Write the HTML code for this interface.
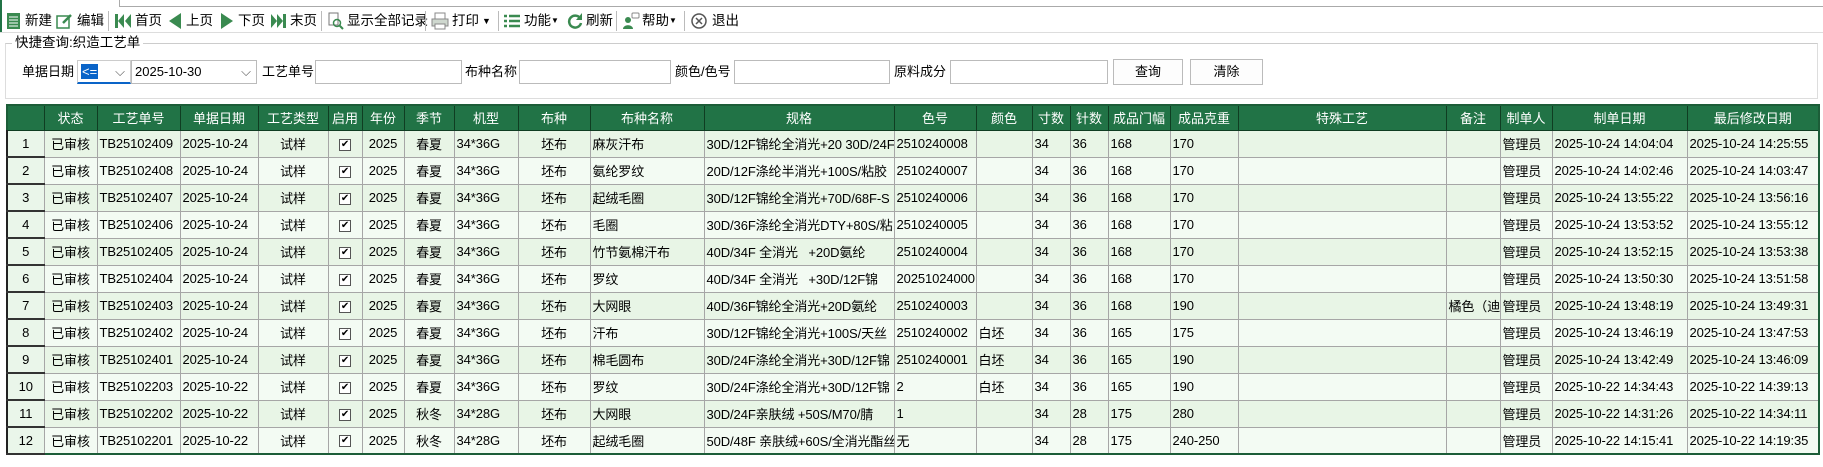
<!DOCTYPE html>
<html><head><meta charset="utf-8"><style>
*{box-sizing:border-box;margin:0;padding:0}
body{width:1823px;height:467px;background:#fff;font-family:"Liberation Sans","Noto Sans CJK SC",sans-serif;font-size:13px;color:#000;position:relative;overflow:hidden}
.a{position:absolute;white-space:nowrap}
.tb{top:11px;height:20px;line-height:20px;font-size:13.5px}
.sep{position:absolute;top:11px;width:1px;height:20px;background:#bbb}
.inp{position:absolute;top:60px;height:24px;border:1px solid #bbb;background:#fff;font-size:13px;line-height:22px;padding-left:3px}
.lbl{position:absolute;top:60px;line-height:24px;font-size:13px}
.btn{position:absolute;top:59px;height:26px;border:1px solid #bbb;background:#fdfdfd;text-align:center;line-height:24px;font-size:13px}
table{position:absolute;left:6px;top:104px;border-collapse:collapse;table-layout:fixed;width:1812px;border:2px solid #1c5d38}
th{background:#217346;color:#fff;font-weight:normal;height:25px;border:1px solid #0f3d22;font-size:13px;text-align:center;overflow:hidden;white-space:nowrap}
td{height:27px;border:1px solid #a6a6a6;font-size:13px;padding-left:2px;overflow:hidden;white-space:nowrap;letter-spacing:-0.1px}
tr:nth-child(odd) td{background:#f3fbf3}
tr:nth-child(even) td{background:#e8f5e6}
td.c{text-align:center;padding:0}
td.n{text-align:center;padding:0;background:#eaf6ea!important;border-left:2px solid #222;border-bottom:2px solid #333}
.cb{display:inline-block;width:12px;height:12px;border:1px solid #555;background:#fff;font-size:10px;line-height:10px;text-align:center;vertical-align:middle}
</style></head><body>
<div class="a" style="left:0;top:0;width:2px;height:32px;background:#217346"></div>
<div class="a" style="left:119px;top:0;width:1px;height:7px;background:#aaa"></div>
<div class="a" style="left:119px;top:6px;width:1704px;height:1px;background:#aaa"></div>
<div class="a" style="left:0;top:32px;width:1823px;height:1px;background:#ddd"></div>

<svg class="a" style="left:6px;top:12px" width="16" height="18"><rect x="1" y="1" width="13" height="16" fill="#3a8a50"/><path d="M3 5h9M3 8h9M3 11h9M3 14h9" stroke="#fff" stroke-width="1"/></svg>
<div class="a tb" style="left:25px">新建</div>
<svg class="a" style="left:56px;top:12px" width="18" height="18"><rect x="1" y="4" width="12" height="12" fill="none" stroke="#3a8a50" stroke-width="1.5"/><path d="M7 11l8-8" stroke="#3a8a50" stroke-width="2.5"/></svg>
<div class="a tb" style="left:77px">编辑</div>
<div class="sep" style="left:108px"></div>
<svg class="a" style="left:114px;top:13px" width="18" height="16"><rect x="1" y="1" width="3" height="14" fill="#3a8a50"/><path d="M10 1L4 8l6 7zM17 1l-6 7 6 7z" fill="#3a8a50"/></svg>
<div class="a tb" style="left:135px">首页</div>
<svg class="a" style="left:167px;top:12px" width="16" height="18"><path d="M14 1L2 9l12 8z" fill="#3a8a50"/></svg>
<div class="a tb" style="left:186px">上页</div>
<svg class="a" style="left:219px;top:12px" width="16" height="18"><path d="M2 1l12 8-12 8z" fill="#3a8a50"/></svg>
<div class="a tb" style="left:238px">下页</div>
<svg class="a" style="left:270px;top:13px" width="18" height="16"><path d="M1 1l6 7-6 7zM7 1l6 7-6 7z" fill="#3a8a50"/><rect x="13" y="1" width="3" height="14" fill="#3a8a50"/></svg>
<div class="a tb" style="left:290px">末页</div>
<div class="sep" style="left:321px"></div>
<svg class="a" style="left:328px;top:12px" width="16" height="18"><rect x="1" y="1" width="9" height="12" fill="none" stroke="#777"/><circle cx="9" cy="11" r="3.5" fill="none" stroke="#3a8a50" stroke-width="1.5"/><path d="M11 13l4 4" stroke="#3a8a50" stroke-width="2"/></svg>
<div class="a tb" style="left:347px">显示全部记录</div>
<div class="sep" style="left:425px"></div>
<svg class="a" style="left:431px;top:12px" width="18" height="18"><rect x="4" y="1" width="10" height="6" fill="none" stroke="#888"/><rect x="1" y="7" width="16" height="7" fill="#cfd8cf" stroke="#888"/><rect x="4" y="12" width="10" height="5" fill="#fff" stroke="#888"/></svg>
<div class="a tb" style="left:452px">打印</div>
<div class="a tb" style="left:482px;font-size:9px">▼</div>
<div class="sep" style="left:498px"></div>
<svg class="a" style="left:503px;top:13px" width="18" height="16"><path d="M1 3h3M1 8h3M1 13h3M6 3h11M6 8h11M6 13h11" stroke="#3a8a50" stroke-width="2.5"/></svg>
<div class="a tb" style="left:524px">功能</div>
<div class="a tb" style="left:551px;font-size:8px">▼</div>
<svg class="a" style="left:567px;top:12px" width="16" height="18"><path d="M13 6A6 6 0 1 0 14 11" fill="none" stroke="#3a8a50" stroke-width="2.5"/><path d="M15 1v7h-6z" fill="#3a8a50"/></svg>
<div class="a tb" style="left:586px">刷新</div>
<div class="sep" style="left:616px"></div>
<svg class="a" style="left:622px;top:12px" width="18" height="18"><circle cx="6" cy="8" r="3" fill="#3a8a50"/><path d="M1 17c0-5 10-5 10 0z" fill="#3a8a50"/><rect x="10" y="1" width="7" height="5" rx="1" fill="none" stroke="#888"/></svg>
<div class="a tb" style="left:642px">帮助</div>
<div class="a tb" style="left:669px;font-size:8px">▼</div>
<div class="sep" style="left:684px"></div>
<svg class="a" style="left:690px;top:12px" width="18" height="18"><circle cx="9" cy="9" r="7" fill="none" stroke="#555" stroke-width="1.5"/><path d="M6 6l6 6M12 6l-6 6" stroke="#555" stroke-width="1.5"/></svg>
<div class="a tb" style="left:712px">退出</div>

<div class="a" style="left:5px;top:43px;width:1813px;height:56px;border:1px solid #ddd;border-top:1px solid #ccc"></div>
<div class="a" style="left:12px;top:34px;background:#fff;padding:0 3px;font-size:13.5px;line-height:18px">快捷查询:织造工艺单</div>

<div class="lbl" style="left:22px">单据日期</div>
<div class="inp" style="left:77px;width:54px;border-color:#ccc;border-bottom:2px solid #0a64c8"><span style="background:#0a64c8;color:#fff;padding:0 1px">&lt;=</span><span style="position:absolute;right:5px;top:0;color:#555">⌵</span></div>
<div class="inp" style="left:131px;width:126px">2025-10-30<span style="position:absolute;right:5px;top:0;color:#555">⌵</span></div>
<div class="lbl" style="left:262px">工艺单号</div>
<div class="inp" style="left:315px;width:147px"></div>
<div class="lbl" style="left:465px">布种名称</div>
<div class="inp" style="left:519px;width:152px"></div>
<div class="lbl" style="left:675px">颜色/色号</div>
<div class="inp" style="left:734px;width:156px"></div>
<div class="lbl" style="left:894px">原料成分</div>
<div class="inp" style="left:950px;width:158px"></div>
<div class="btn" style="left:1113px;width:70px">查询</div>
<div class="btn" style="left:1190px;width:73px">清除</div>

<table>
<colgroup><col style="width:37px"><col style="width:53px"><col style="width:83px"><col style="width:78px"><col style="width:70px"><col style="width:34px"><col style="width:42px"><col style="width:50px"><col style="width:64px"><col style="width:72px"><col style="width:114px"><col style="width:190px"><col style="width:82px"><col style="width:56px"><col style="width:38px"><col style="width:38px"><col style="width:62px"><col style="width:68px"><col style="width:208px"><col style="width:54px"><col style="width:52px"><col style="width:135px"><col style="width:132px"></colgroup>
<tr><th></th><th>状态</th><th>工艺单号</th><th>单据日期</th><th>工艺类型</th><th>启用</th><th>年份</th><th>季节</th><th>机型</th><th>布种</th><th>布种名称</th><th>规格</th><th>色号</th><th>颜色</th><th>寸数</th><th>针数</th><th>成品门幅</th><th>成品克重</th><th>特殊工艺</th><th>备注</th><th>制单人</th><th>制单日期</th><th>最后修改日期</th></tr>
<tr><td class="n">1</td><td class="c">已审核</td><td>TB25102409</td><td>2025-10-24</td><td class="c">试样</td><td class="c"><span class="cb">✔</span></td><td class="c">2025</td><td class="c">春夏</td><td>34*36G</td><td class="c">坯布</td><td>麻灰汗布</td><td>30D/12F锦纶全消光+20 30D/24F</td><td>2510240008</td><td></td><td>34</td><td>36</td><td>168</td><td>170</td><td></td><td></td><td>管理员</td><td>2025-10-24 14:04:04</td><td>2025-10-24 14:25:55</td></tr>
<tr><td class="n">2</td><td class="c">已审核</td><td>TB25102408</td><td>2025-10-24</td><td class="c">试样</td><td class="c"><span class="cb">✔</span></td><td class="c">2025</td><td class="c">春夏</td><td>34*36G</td><td class="c">坯布</td><td>氨纶罗纹</td><td>20D/12F涤纶半消光+100S/粘胶</td><td>2510240007</td><td></td><td>34</td><td>36</td><td>168</td><td>170</td><td></td><td></td><td>管理员</td><td>2025-10-24 14:02:46</td><td>2025-10-24 14:03:47</td></tr>
<tr><td class="n">3</td><td class="c">已审核</td><td>TB25102407</td><td>2025-10-24</td><td class="c">试样</td><td class="c"><span class="cb">✔</span></td><td class="c">2025</td><td class="c">春夏</td><td>34*36G</td><td class="c">坯布</td><td>起绒毛圈</td><td>30D/12F锦纶全消光+70D/68F-S</td><td>2510240006</td><td></td><td>34</td><td>36</td><td>168</td><td>170</td><td></td><td></td><td>管理员</td><td>2025-10-24 13:55:22</td><td>2025-10-24 13:56:16</td></tr>
<tr><td class="n">4</td><td class="c">已审核</td><td>TB25102406</td><td>2025-10-24</td><td class="c">试样</td><td class="c"><span class="cb">✔</span></td><td class="c">2025</td><td class="c">春夏</td><td>34*36G</td><td class="c">坯布</td><td>毛圈</td><td>30D/36F涤纶全消光DTY+80S/粘</td><td>2510240005</td><td></td><td>34</td><td>36</td><td>168</td><td>170</td><td></td><td></td><td>管理员</td><td>2025-10-24 13:53:52</td><td>2025-10-24 13:55:12</td></tr>
<tr><td class="n">5</td><td class="c">已审核</td><td>TB25102405</td><td>2025-10-24</td><td class="c">试样</td><td class="c"><span class="cb">✔</span></td><td class="c">2025</td><td class="c">春夏</td><td>34*36G</td><td class="c">坯布</td><td>竹节氨棉汗布</td><td>40D/34F 全消光&nbsp;&nbsp; +20D氨纶</td><td>2510240004</td><td></td><td>34</td><td>36</td><td>168</td><td>170</td><td></td><td></td><td>管理员</td><td>2025-10-24 13:52:15</td><td>2025-10-24 13:53:38</td></tr>
<tr><td class="n">6</td><td class="c">已审核</td><td>TB25102404</td><td>2025-10-24</td><td class="c">试样</td><td class="c"><span class="cb">✔</span></td><td class="c">2025</td><td class="c">春夏</td><td>34*36G</td><td class="c">坯布</td><td>罗纹</td><td>40D/34F 全消光&nbsp;&nbsp; +30D/12F锦</td><td>20251024000</td><td></td><td>34</td><td>36</td><td>168</td><td>170</td><td></td><td></td><td>管理员</td><td>2025-10-24 13:50:30</td><td>2025-10-24 13:51:58</td></tr>
<tr><td class="n">7</td><td class="c">已审核</td><td>TB25102403</td><td>2025-10-24</td><td class="c">试样</td><td class="c"><span class="cb">✔</span></td><td class="c">2025</td><td class="c">春夏</td><td>34*36G</td><td class="c">坯布</td><td>大网眼</td><td>40D/36F锦纶全消光+20D氨纶</td><td>2510240003</td><td></td><td>34</td><td>36</td><td>168</td><td>190</td><td></td><td>橘色（迪</td><td>管理员</td><td>2025-10-24 13:48:19</td><td>2025-10-24 13:49:31</td></tr>
<tr><td class="n">8</td><td class="c">已审核</td><td>TB25102402</td><td>2025-10-24</td><td class="c">试样</td><td class="c"><span class="cb">✔</span></td><td class="c">2025</td><td class="c">春夏</td><td>34*36G</td><td class="c">坯布</td><td>汗布</td><td>30D/12F锦纶全消光+100S/天丝</td><td>2510240002</td><td>白坯</td><td>34</td><td>36</td><td>165</td><td>175</td><td></td><td></td><td>管理员</td><td>2025-10-24 13:46:19</td><td>2025-10-24 13:47:53</td></tr>
<tr><td class="n">9</td><td class="c">已审核</td><td>TB25102401</td><td>2025-10-24</td><td class="c">试样</td><td class="c"><span class="cb">✔</span></td><td class="c">2025</td><td class="c">春夏</td><td>34*36G</td><td class="c">坯布</td><td>棉毛圆布</td><td>30D/24F涤纶全消光+30D/12F锦</td><td>2510240001</td><td>白坯</td><td>34</td><td>36</td><td>165</td><td>190</td><td></td><td></td><td>管理员</td><td>2025-10-24 13:42:49</td><td>2025-10-24 13:46:09</td></tr>
<tr><td class="n">10</td><td class="c">已审核</td><td>TB25102203</td><td>2025-10-22</td><td class="c">试样</td><td class="c"><span class="cb">✔</span></td><td class="c">2025</td><td class="c">春夏</td><td>34*36G</td><td class="c">坯布</td><td>罗纹</td><td>30D/24F涤纶全消光+30D/12F锦</td><td>2</td><td>白坯</td><td>34</td><td>36</td><td>165</td><td>190</td><td></td><td></td><td>管理员</td><td>2025-10-22 14:34:43</td><td>2025-10-22 14:39:13</td></tr>
<tr><td class="n">11</td><td class="c">已审核</td><td>TB25102202</td><td>2025-10-22</td><td class="c">试样</td><td class="c"><span class="cb">✔</span></td><td class="c">2025</td><td class="c">秋冬</td><td>34*28G</td><td class="c">坯布</td><td>大网眼</td><td>30D/24F亲肤绒 +50S/M70/腈</td><td>1</td><td></td><td>34</td><td>28</td><td>175</td><td>280</td><td></td><td></td><td>管理员</td><td>2025-10-22 14:31:26</td><td>2025-10-22 14:34:11</td></tr>
<tr><td class="n">12</td><td class="c">已审核</td><td>TB25102201</td><td>2025-10-22</td><td class="c">试样</td><td class="c"><span class="cb">✔</span></td><td class="c">2025</td><td class="c">秋冬</td><td>34*28G</td><td class="c">坯布</td><td>起绒毛圈</td><td>50D/48F 亲肤绒+60S/全消光酯丝</td><td>无</td><td></td><td>34</td><td>28</td><td>175</td><td>240-250</td><td></td><td></td><td>管理员</td><td>2025-10-22 14:15:41</td><td>2025-10-22 14:19:35</td></tr>
</table>
</body></html>
